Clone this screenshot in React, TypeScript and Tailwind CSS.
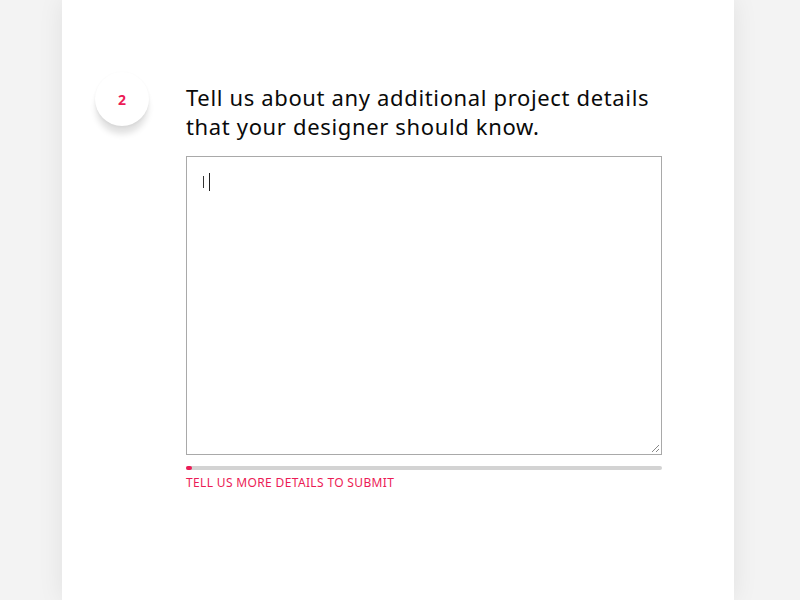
import React from "react";

export default function App() {
  return (
    <div className="w-[800px] h-[600px] bg-[#f3f3f3] overflow-hidden flex" style={{ fontFamily: "'Noto Sans', sans-serif" }}>
      <div className="ml-[62px] w-[672px] h-full bg-white shadow-[0_0_24px_rgba(0,0,0,0.08)] flex pt-[71px]">
        <div className="w-[124px] flex justify-end pr-[37px]">
          <div className="mt-[1px] w-[54px] h-[54px] rounded-full bg-white shadow-[0_9px_6px_-1px_rgba(0,0,0,0.12),0_1px_3px_rgba(0,0,0,0.06)] flex items-center justify-center text-[14px] font-bold text-[#ec1b55]">
            2
          </div>
        </div>
        <div className="w-[476px] flex flex-col">
          <h1 className="text-[22px] leading-[29px] text-[#0a0a0a] font-normal tracking-[0.65px] mt-[12px]">
            Tell us about any additional project details that your designer should know.
          </h1>
          <div className="mt-[15px] relative h-[299px] border border-[#a9a9a9] bg-white">
            <div className="absolute left-[16px] top-[16px] flex items-center gap-[5px]">
              <div className="w-[1px] h-[12px] bg-[#333]" />
              <div className="w-[1px] h-[18px] bg-[#222]" />
            </div>
            <svg className="absolute right-[1px] bottom-[1px]" width="9" height="9" viewBox="0 0 9 9">
              <line x1="8" y1="1" x2="1" y2="8" stroke="#888" strokeWidth="1" />
              <line x1="8" y1="5" x2="5" y2="8" stroke="#888" strokeWidth="1" />
            </svg>
          </div>
          <div className="mt-[11px] h-[4px] rounded-full bg-[#d3d3d3] relative">
            <div className="absolute left-0 top-0 h-[4px] w-[6px] rounded-full bg-[#ec1b55]" />
          </div>
          <div className="mt-[6px] text-[12px] leading-[14px] text-[#ec1b55] uppercase tracking-[0.35px]">
            Tell us more details to submit
          </div>
        </div>
      </div>
    </div>
  );
}
